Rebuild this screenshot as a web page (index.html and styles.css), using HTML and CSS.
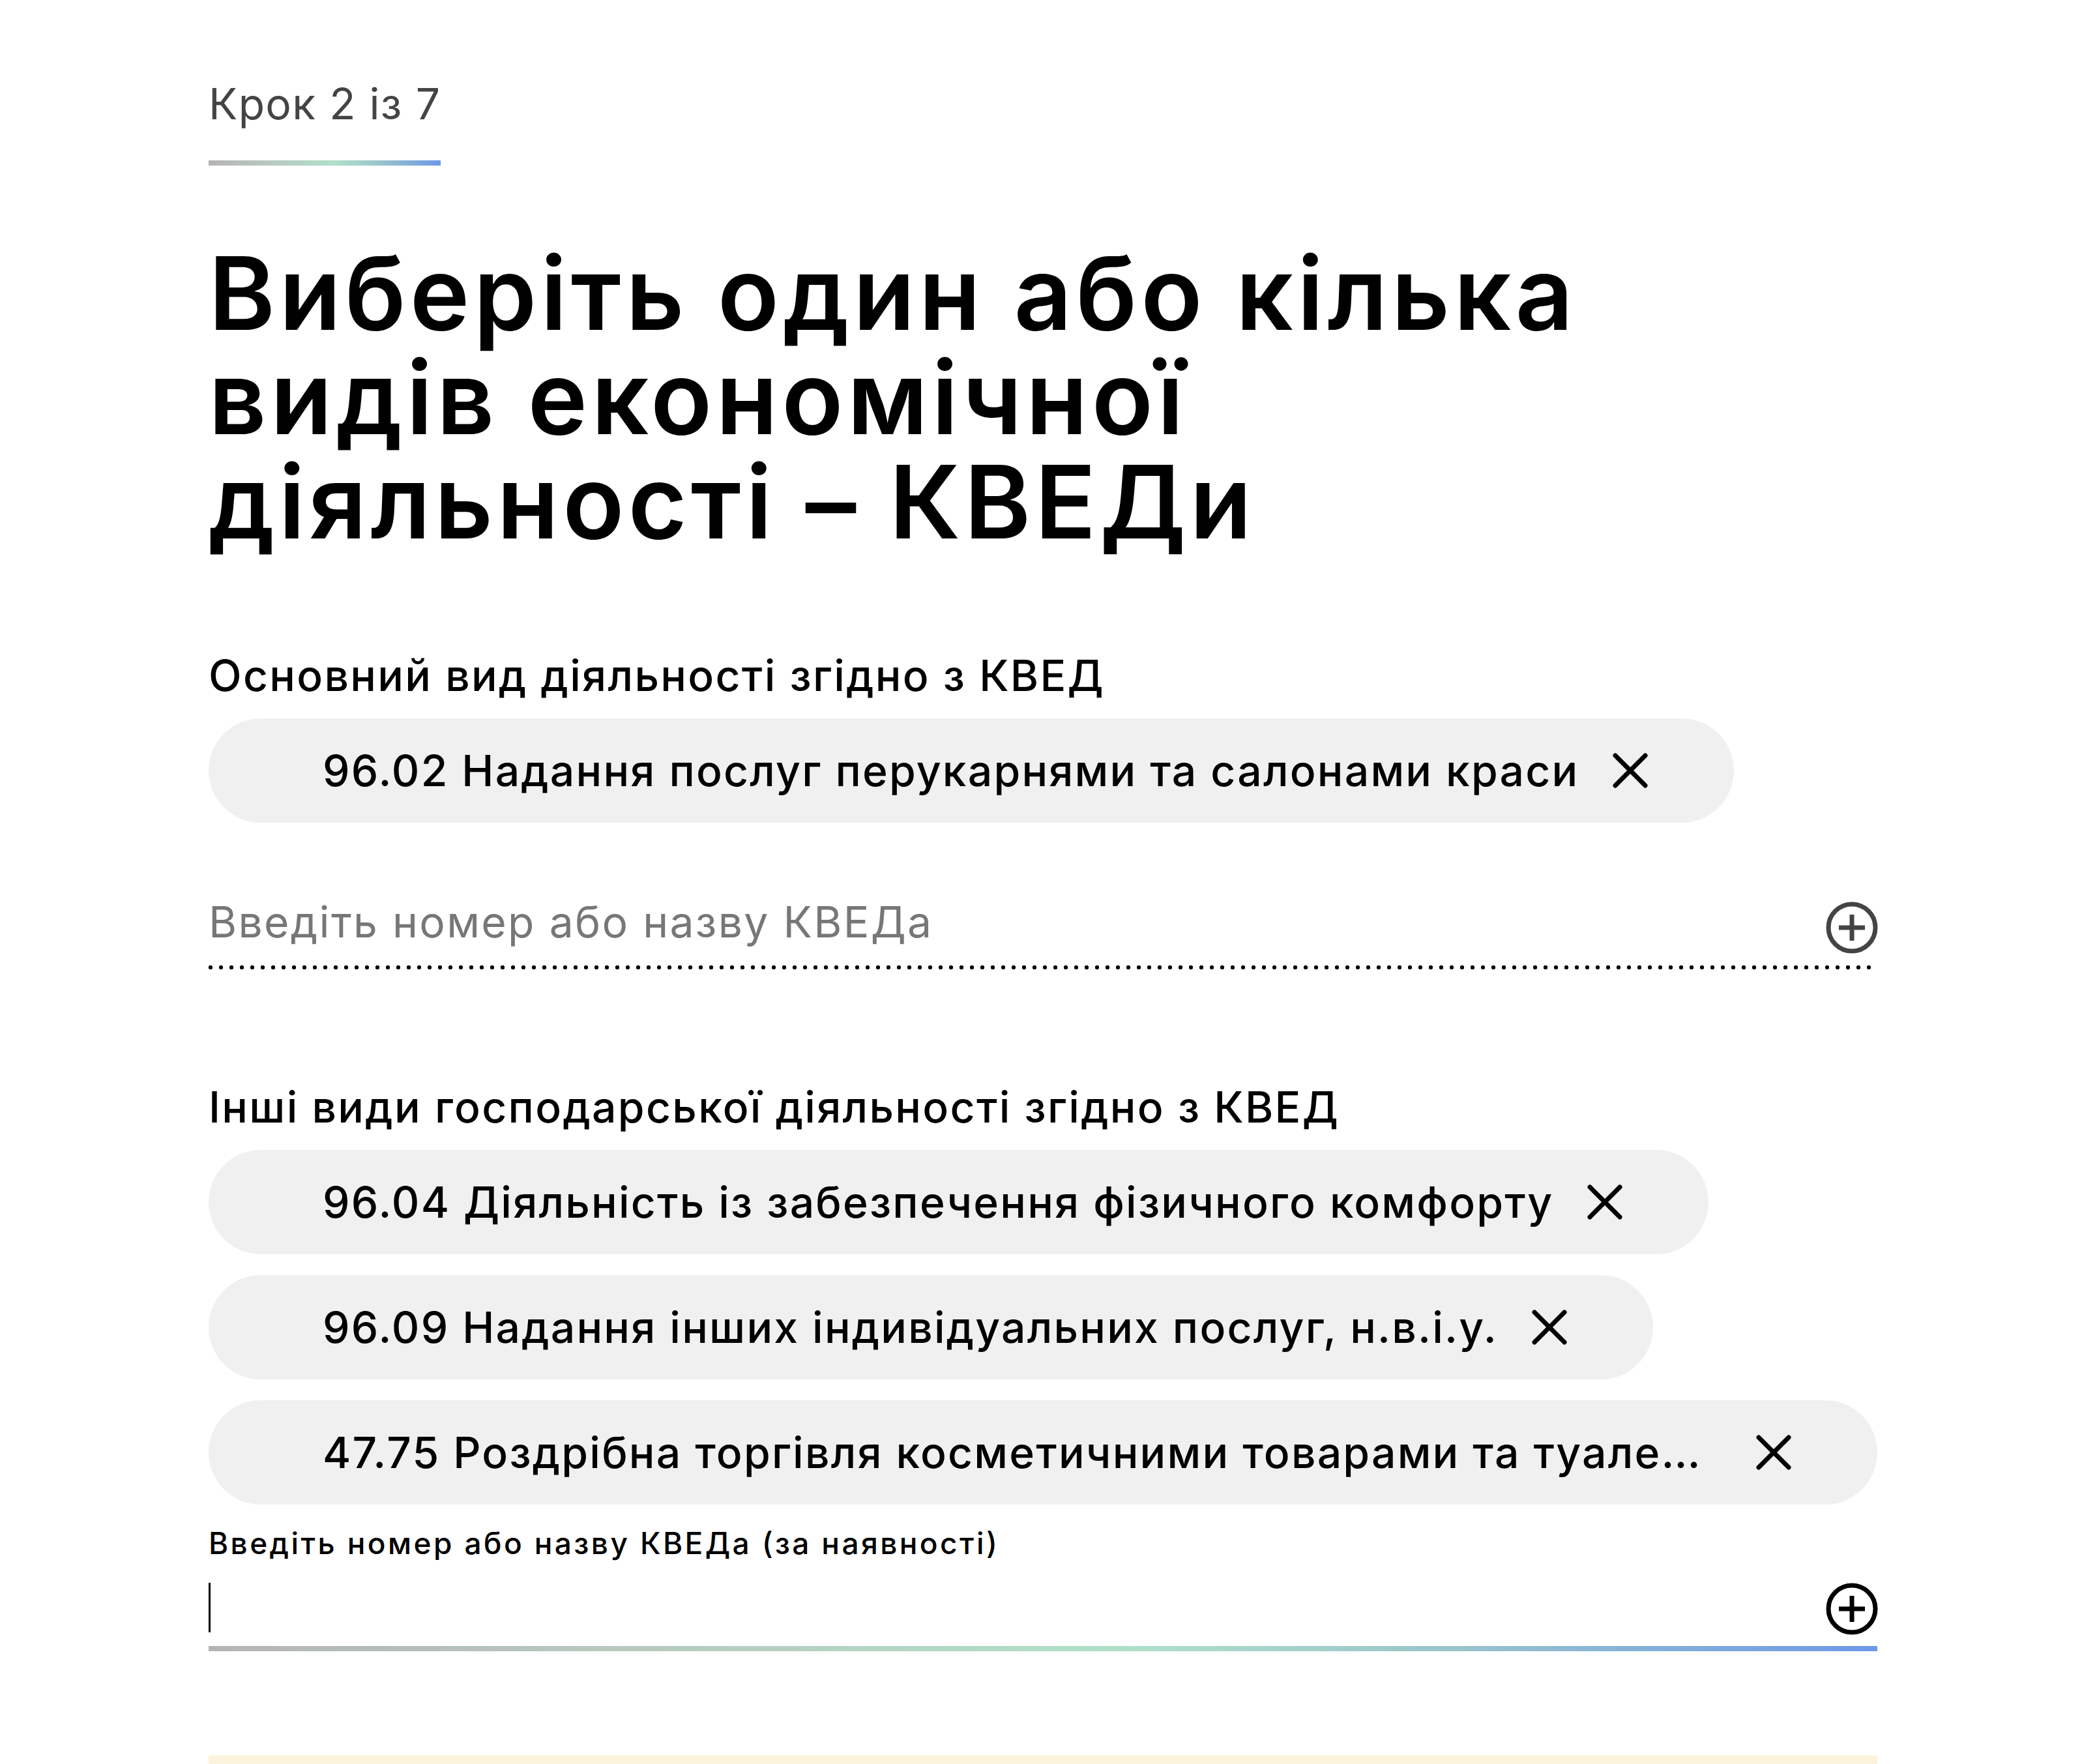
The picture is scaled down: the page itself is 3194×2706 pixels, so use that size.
FILE: index.html
```html
<!DOCTYPE html>
<html lang="uk">
<head>
<meta charset="utf-8">
<title>Крок 2 із 7 — КВЕДи</title>
<link rel="stylesheet" href="styles.css">
</head>
<body>
<main class="page">
  <div class="step">Крок 2 із 7</div>

  <h1 class="title">Виберіть один або кілька видів економічної діяльності – КВЕДи</h1>

  <section class="group group-main">
    <div class="label">Основний вид діяльності згідно з КВЕД</div>
    <div class="chips">
      <div class="chip">
        <span class="chip-text">96.02 Надання послуг перукарнями та салонами краси</span>
        <svg class="chip-x" viewBox="0 0 54 54" aria-hidden="true"><path d="M4 4 L50 50 M50 4 L4 50"/></svg>
      </div>
    </div>
    <div class="field field-dotted">
      <span class="placeholder">Введіть номер або назву КВЕДа</span>
      <svg class="plus plus-grey" viewBox="0 0 80 80" aria-hidden="true"><circle cx="40" cy="40" r="36"/><path d="M20 40 H60 M40 20 V60"/></svg>
    </div>
  </section>

  <section class="group group-other">
    <div class="label">Інші види господарської діяльності згідно з КВЕД</div>
    <div class="chips">
      <div class="chip">
        <span class="chip-text">96.04 Діяльність із забезпечення фізичного комфорту</span>
        <svg class="chip-x" viewBox="0 0 54 54" aria-hidden="true"><path d="M4 4 L50 50 M50 4 L4 50"/></svg>
      </div>
      <div class="chip">
        <span class="chip-text">96.09 Надання інших індивідуальних послуг, н.в.і.у.</span>
        <svg class="chip-x" viewBox="0 0 54 54" aria-hidden="true"><path d="M4 4 L50 50 M50 4 L4 50"/></svg>
      </div>
      <div class="chip chip-full">
        <span class="chip-text">47.75 Роздрібна торгівля косметичними товарами та туалетними засобами в спеціалізованих магазинах</span>
        <svg class="chip-x" viewBox="0 0 54 54" aria-hidden="true"><path d="M4 4 L50 50 M50 4 L4 50"/></svg>
      </div>
    </div>
    <div class="small-label">Введіть номер або назву КВЕДа (за наявності)</div>
    <div class="field field-active">
      <span class="caret"></span>
      <svg class="plus plus-black" viewBox="0 0 80 80" aria-hidden="true"><circle cx="40" cy="40" r="36"/><path d="M20 40 H60 M40 20 V60"/></svg>
    </div>
  </section>

  <div class="notice"></div>
</main>
</body>
</html>
```

FILE: styles.css
```css
html, body {
  margin: 0;
  padding: 0;
  background: #ffffff;
}

body {
  font-family: Inter, "Noto Sans", sans-serif;
  color: #000;
  overflow: hidden;
}

.page {
  width: 2560px;
  margin-left: 320px;
  padding-top: 119px;
}

/* step indicator */
.step {
  display: inline-block;
  font-size: 66px;
  line-height: 80px;
  letter-spacing: 1.3px;
  color: #444;
  padding-bottom: 55px;
  background-image: linear-gradient(90deg, #b4b4b4 0%, #b8c9bf 25%, #aee0c9 55%, #98c3cc 75%, #6d98e8 100%);
  background-size: 100% 8px;
  background-position: left bottom;
  background-repeat: no-repeat;
}

/* heading */
.title {
  margin: 116px 0 0;
  width: 2300px;
  font-size: 155px;
  line-height: 160px;
  font-weight: 600;
  letter-spacing: 6px;
}

.group-main {
  margin-top: 146px;
}

.group-other {
  margin-top: 171px;
}

.label {
  font-size: 66px;
  line-height: 80px;
  font-weight: 500;
  letter-spacing: 2.3px;
}

.chips {
  margin-top: 26px;
  display: flex;
  flex-direction: column;
  align-items: flex-start;
  gap: 32px;
}

.chip {
  display: flex;
  align-items: center;
  gap: 52px;
  box-sizing: border-box;
  height: 160px;
  max-width: 100%;
  padding: 0 132px 0 175px;
  border-radius: 80px;
  background: #f0f0f0;
}

.chip-full {
  width: 100%;
}

.chip-text {
  min-width: 0;
  font-size: 66px;
  line-height: 80px;
  font-weight: 500;
  letter-spacing: 2.2px;
  white-space: nowrap;
  overflow: hidden;
  text-overflow: ellipsis;
}

.chip-x {
  flex: none;
  width: 54px;
  height: 54px;
  fill: none;
  stroke: #000;
  stroke-width: 7;
  stroke-linecap: round;
}

/* input fields */
.field {
  display: flex;
  align-items: flex-start;
  justify-content: space-between;
  background-repeat: no-repeat;
  background-position: left bottom;
}

.field-dotted {
  margin-top: 112px;
  padding-bottom: 24px;
  background-image: radial-gradient(circle at 3px 3px, #000 3.1px, transparent 3.3px);
  background-size: 16px 6px;
  background-repeat: repeat-x;
}

.placeholder {
  font-size: 66px;
  line-height: 80px;
  letter-spacing: 2.3px;
  color: #777;
}

.plus {
  flex: none;
  width: 80px;
  height: 80px;
  margin-top: 9px;
  margin-right: -1px;
  fill: none;
  stroke-width: 7;
}

.plus-grey {
  stroke: #444;
}

.plus-black {
  stroke: #000;
}

.small-label {
  margin-top: 31px;
  font-size: 46px;
  line-height: 56px;
  font-weight: 500;
  letter-spacing: 3.4px;
}

.field-active {
  margin-top: 33px;
  padding-bottom: 25px;
  background-image: linear-gradient(90deg, #b4b4b4 0%, #b8c9bf 25%, #aee0c9 55%, #98c3cc 75%, #6d98e8 100%);
  background-size: 100% 8px;
}

.field-active .plus {
  margin-top: 0;
}

.caret {
  width: 3px;
  height: 76px;
  background: #000;
}

.notice {
  margin-top: 160px;
  height: 200px;
  background: #fbf3dc;
}
```
